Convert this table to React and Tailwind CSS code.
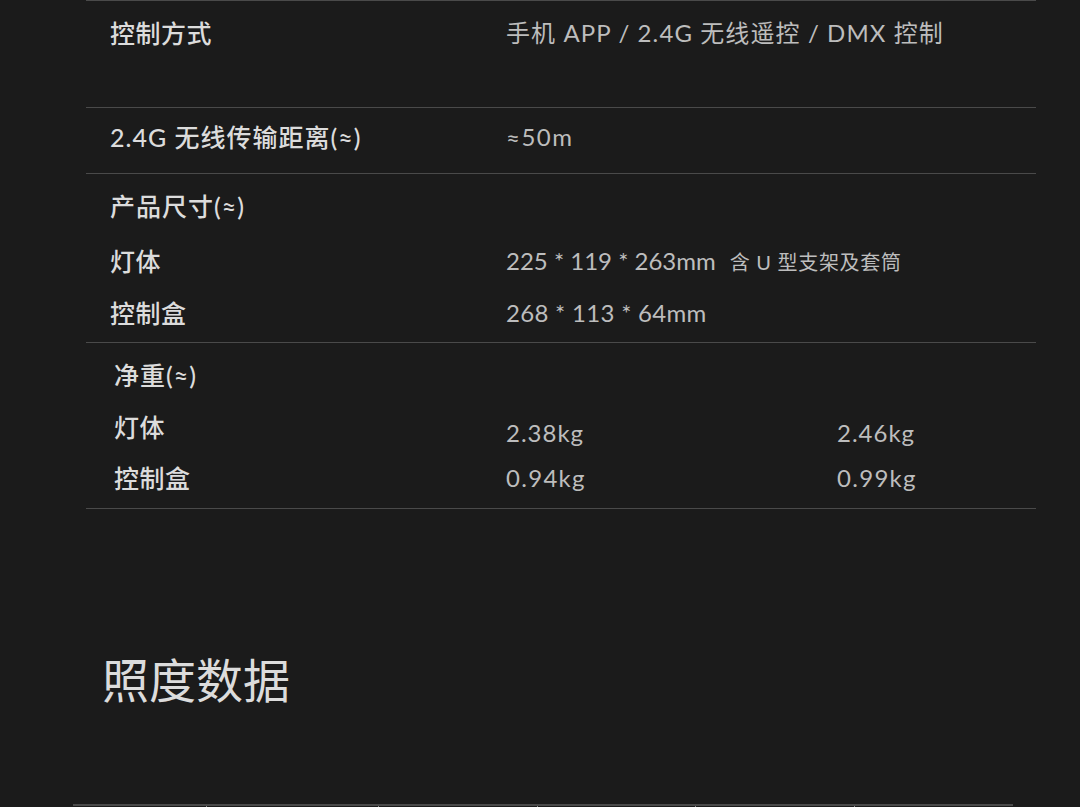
export default function App() {
  const font = { fontFamily: "Lato, 'Noto Sans CJK SC', sans-serif" };
  return (
    <div className="w-[1080px] h-[807px] overflow-hidden bg-[#1b1b1b] text-[#bdbdbd]" style={font}>
      <div className="ml-[86px] w-[950px]">
        {/* Row 1 */}
        <div className="border-t border-[#4a4a4a] h-[107px] pl-[24px] pt-[14px] grid grid-cols-[396px_1fr] text-[24px] leading-[36px]">
          <div className="text-[#dcdcdc] font-medium text-[25px] tracking-[0.5px]">控制方式</div>
          <div className="tracking-[1.1px]">手机 APP / 2.4G 无线遥控 / DMX 控制</div>
        </div>
        {/* Row 2 */}
        <div className="border-t border-[#4a4a4a] h-[66px] pl-[24px] pt-[11px] grid grid-cols-[396px_1fr] text-[24px] leading-[36px]">
          <div className="text-[#dcdcdc] font-medium text-[25px] tracking-[1px]">2.4G 无线传输距离(≈)</div>
          <div className="tracking-[1.5px]">≈50m</div>
        </div>
        {/* Row 3 */}
        <div className="border-t border-[#4a4a4a] h-[169px] pl-[24px] pt-[14px] text-[24px] leading-[36px]">
          <div className="text-[#dcdcdc] font-medium text-[25px] tracking-[1px]">产品尺寸(≈)</div>
          <div className="grid grid-cols-[396px_1fr] mt-[19px]">
            <div className="text-[#dcdcdc] font-medium text-[25px] tracking-[0.5px]">灯体</div>
            <div className="flex items-baseline">
              <span>225 * 119 * 263mm</span>
              <span className="ml-[14px] text-[20px] tracking-[0.7px]">含 U 型支架及套筒</span>
            </div>
          </div>
          <div className="grid grid-cols-[396px_1fr] mt-[15px]">
            <div className="text-[#dcdcdc] font-medium text-[25px] tracking-[0.5px]">控制盒</div>
            <div className="tracking-[0.3px]">268 * 113 * 64mm</div>
          </div>
        </div>
        {/* Row 4 */}
        <div className="border-t border-[#4a4a4a] border-b h-[167px] pl-[28px] pt-[14px] text-[24px] leading-[36px]">
          <div className="text-[#dcdcdc] font-medium text-[25px] tracking-[1px]">净重(≈)</div>
          <div className="grid grid-cols-[392px_331px_1fr] mt-[16px]">
            <div className="text-[#dcdcdc] font-medium text-[25px] tracking-[0.5px]">灯体</div>
            <div className="pt-[6px] tracking-[1px]">2.38kg</div>
            <div className="pt-[6px] tracking-[1px]">2.46kg</div>
          </div>
          <div className="grid grid-cols-[392px_331px_1fr] mt-[9px]">
            <div className="text-[#dcdcdc] font-medium text-[25px] tracking-[0.5px]">控制盒</div>
            <div className="tracking-[1.3px]">0.94kg</div>
            <div className="tracking-[1.3px]">0.99kg</div>
          </div>
        </div>
      </div>

      <div className="ml-[102px] mt-[148px] text-[47px] leading-[47px] text-[#dcdcdc]">照度数据</div>

      <div className="ml-[73px] mt-[100px] w-[940px] border-t-2 border-[#4a4a4a] grid grid-cols-[133px_172px_159px_158px_159px_159px] h-[40px]">
        <div></div>
        <div className="border-l border-[#8a8a8a]"></div>
        <div className="border-l border-[#8a8a8a]"></div>
        <div className="border-l border-[#8a8a8a]"></div>
        <div className="border-l border-[#8a8a8a]"></div>
        <div className="border-l border-[#8a8a8a]"></div>
      </div>
    </div>
  );
}
